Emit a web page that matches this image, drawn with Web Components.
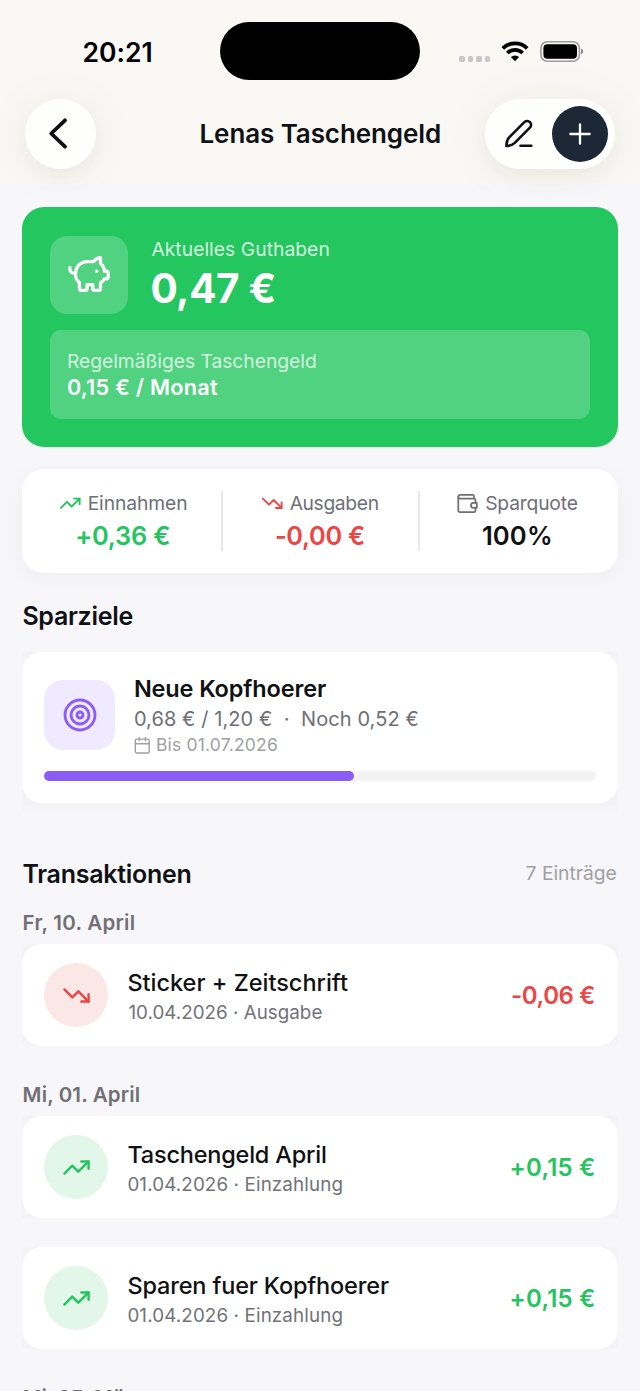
<!DOCTYPE html>
<html lang="de">
<head>
<meta charset="utf-8">
<title>Lenas Taschengeld</title>
<style>
html{background:#f7f7fa}
body{margin:0;width:640px;height:1391px;overflow:hidden;font-family:Inter,"Liberation Sans",sans-serif;color:#101114}
</style>
</head>
<body>
<pocket-money-app></pocket-money-app>
<script>
const define = (name, html, setup) => {
  const tpl = document.createElement('template');
  tpl.innerHTML = html;
  customElements.define(name, class extends HTMLElement {
    connectedCallback() {
      if (this.shadowRoot) return;
      this.attachShadow({mode: 'open'}).append(tpl.content.cloneNode(true));
      if (setup) setup(this, this.shadowRoot);
    }
  });
};

const ICONS = {
  back: '<path d="M19 1.300 5.200 14.500 19 27.700"/>',
  plus: '<path d="M12 2.300v19.400M2.300 12h19.400"/>',
  pig: '<path d="M11 17h3v2a1 1 0 0 0 1 1h2a1 1 0 0 0 1-1v-3a3.16 3.16 0 0 0 2-2h1a1 1 0 0 0 1-1v-2a1 1 0 0 0-1-1h-1a5 5 0 0 0-2-4V3a4 4 0 0 0-3.2 1.6l-.3.4H11a6 6 0 0 0-6 6v1a5 5 0 0 0 2 4v3a1 1 0 0 0 1 1h2a1 1 0 0 0 1-1z"/><path d="M16 10h.01"/><path d="M2 8v1a2 2 0 0 0 2 2h1"/>',
  up: '<path d="M16 7h6v6"/><path d="m22 7-8.5 8.5-5-5L2 17"/>',
  down: '<path d="M16 17h6v-6"/><path d="m22 17-8.5-8.5-5 5L2 7"/>',
  wallet: '<path d="M20.300 11V8.300a1.500 1.500 0 0 0-1.500-1.500H4.200a1.800 1.800 0 0 1-1.800-1.900 2 2 0 0 1 2-2h12.800a1.600 1.600 0 0 1 1.600 1.600v2.300"/><path d="M2.400 4.900v14.300a1.800 1.800 0 0 0 1.800 1.800h14.600a1.500 1.500 0 0 0 1.500-1.500v-2.800"/><path d="M21.700 11.300h-3.500a2.600 2.600 0 0 0 0 5.200h3.500z"/>',
  target: '<circle cx="12" cy="12" r="10"/><circle cx="12" cy="12" r="6"/><circle cx="12" cy="12" r="2"/>',
  calendar: '<path d="M8 2v4M16 2v4M3 10h18"/><rect x="3" y="4" width="18" height="18" rx="2"/>',
  pencil: '<path d="M3.400 28c0-3.400.6-6.400 2.800-8.700L21.600 3.900a3.900 3.900 0 0 1 5.500 5.500L11.800 24.900c-2.300 2.200-5 3.100-8.400 3.100z"/><path d="M17.500 27.800h10.800"/>'
};
define('ui-icon', '<style>:host{display:block;flex:none}svg{display:block;fill:none;stroke:currentColor;stroke-linecap:round;stroke-linejoin:round;overflow:visible}</style><svg></svg>', (el, root) => {
  const s = el.getAttribute('size'), svg = root.querySelector('svg');
  svg.setAttribute('viewBox', el.getAttribute('box') || '0 0 24 24');
  svg.setAttribute('width', s);
  svg.setAttribute('height', s);
  svg.setAttribute('stroke-width', el.getAttribute('stroke') || 2);
  svg.innerHTML = ICONS[el.getAttribute('name')];
});

/* One line of text. Its box is the cap height tall; "w" tracks the line to an optical width. */
const pen = document.createElement('canvas').getContext('2d');
define('ui-text', '<style>:host{display:block;flex:none;white-space:pre;line-height:.7273}</style><slot></slot>', (el) => {
  const size = el.getAttribute('size'), weight = el.getAttribute('weight') || 400, w = el.getAttribute('w') - 1;
  const text = el.textContent;
  el.style.fontSize = size + 'px';
  el.style.fontWeight = weight;
  pen.font = `${weight} ${size}px Inter`;
  const m = pen.measureText(text);
  const ink = m.actualBoundingBoxRight + m.actualBoundingBoxLeft;
  el.style.letterSpacing = ((w - ink) / (text.length - 1)).toFixed(3) + 'px';
  el.style.textIndent = m.actualBoundingBoxLeft.toFixed(2) + 'px';
  el.style.width = w + 'px';
});

define('status-bar', `<style>
:host{display:grid;grid-template-columns:220px 200px 1fr;height:98px;box-sizing:border-box;padding-top:22px;color:#000}
.time{padding:20.500px 0 0 83.500px}
.island{height:58px;border-radius:29px;background:#000}
.sys{display:flex;align-items:flex-start;padding:19px 0 0 39px}
.dots{display:flex;gap:3px;padding-top:15px}
.dots i{width:5.600px;height:5.600px;border-radius:1.800px;background:#c8c8ca}
.wifi{margin-left:10.700px}
.bat{margin-left:11px}
svg{display:block}
</style>
<div class="time"><ui-text size="26.500" weight="600" w="69">20:21</ui-text></div>
<div class="island"></div>
<div class="sys"><div class="dots"><i></i><i></i><i></i><i></i></div>
<svg class="wifi" width="28" height="21" viewBox="0 0 28 21"><g fill="none" stroke="#000" stroke-width="3.700"><path d="M1.800 7.300a17.500 17.500 0 0 1 24.400 0"/><path d="M6.300 12a11.200 11.200 0 0 1 15.400 0"/></g><path d="M14 20.200 9.900 16.100a6 6 0 0 1 8.200 0z"/></svg>
<svg class="bat" width="45" height="21" viewBox="0 0 45 21"><rect x=".9" y=".8" width="38.500" height="19.400" rx="6.300" fill="none" stroke="#9c9b9e" stroke-width="1.600"/><rect x="3.400" y="3.300" width="33.600" height="14.400" rx="4"/><path d="M41 7.600q2.300 1 2.300 2.900t-2.300 2.900z" fill="#8f8f92"/></svg></div>`);

define('nav-bar', `<style>
:host{display:flex;align-items:flex-start;justify-content:space-between;padding:0 25.500px 0 25px;height:86px}
.glass{display:flex;align-items:center;height:70px;box-sizing:border-box;border-radius:35px;background:#fefefd;box-shadow:0 8px 14px rgba(60,50,60,.035),0 3px 50px rgba(60,50,40,.06)}
.back{width:70.500px;margin-top:.5px;justify-content:center}
.title{padding-top:27px;margin-left:60.500px}
.acts{width:130px;margin-top:.5px;justify-content:flex-end;padding:0 6.500px 0 0;gap:18px}
.add{display:grid;place-items:center;width:56px;height:56px;border-radius:50%;background:#1c2836;color:#fff}
</style>
<div class="glass back"><ui-icon name="back" size="29" box="0 0 29 29" stroke="3.800"></ui-icon></div>
<div class="title"><ui-text size="26" weight="600" w="240.500">Lenas Taschengeld</ui-text></div>
<div class="glass acts"><ui-icon name="pencil" size="31" box="0 0 31 31" stroke="2.600"></ui-icon><div class="add"><ui-icon name="plus" size="24" stroke="2.300"></ui-icon></div></div>`);

define('balance-card', `<style>
:host{display:block;box-sizing:border-box;height:239.500px;border-radius:22px;background:#24c65f;padding:28.500px 28px;color:#fff}
.top{display:flex;gap:23px;height:94.500px}
.tile{display:grid;place-items:center;width:78px;height:78px;border-radius:17px;background:#50d280}
.col{padding-top:6px}
.big{margin-top:18.500px}
.soft{color:#d3f4df}
.plan{box-sizing:border-box;height:88.500px;border-radius:11px;background:#50d280;padding:24px 17.500px}
.plan .v{margin-top:12px}
</style>
<div class="top"><div class="tile"><ui-icon name="pig" size="46" stroke="1.700"></ui-icon></div>
<div class="col"><ui-text class="soft" size="19.300" w="178">Aktuelles Guthaben</ui-text><ui-text class="big" size="40.500" weight="700" w="124">0,47 €</ui-text></div></div>
<div class="plan"><ui-text class="soft" size="19.300" w="249">Regelmäßiges Taschengeld</ui-text><ui-text class="v" size="21.700" weight="600" w="151">0,15 € / Monat</ui-text></div>`);

define('stat-item', `<style>
:host{display:flex;flex-direction:column;align-items:center;flex:none}
.l{display:flex;align-items:center;color:#6f6f76;height:24px}
.v{margin-top:12px}
</style><div class="l"><slot name="icon"></slot><slot name="label"></slot></div><div class="v"><slot></slot></div>`);

define('stats-card', `<style>
:host{display:flex;box-sizing:border-box;height:104px;border-radius:22px;background:#fff;padding-top:22px;box-shadow:0 5px 24px rgba(40,40,50,.04)}
hr{border:0;margin:0;width:2px;height:60px;background:#e8e8eb}
.g{color:#22c55e}.r{color:#ef4444}.w{color:#6f6f76}
[slot=icon]{margin-right:7px}
[slot=label]{padding-top:.5px}
</style>
<stat-item style="width:198.500px"><ui-icon slot="icon" class="g" name="up" size="22.500" stroke="2" style="margin-left:2px"></ui-icon><ui-text slot="label" size="19.300" w="98.500">Einnahmen</ui-text><ui-text class="g" size="25.300" weight="600" w="93" style="margin-left:3px">+0,36 €</ui-text></stat-item><hr>
<stat-item style="width:195px"><ui-icon slot="icon" class="r" name="down" size="22.500" stroke="2" style="margin-right:6px;margin-left:-2px"></ui-icon><ui-text slot="label" size="19.300" w="89">Ausgaben</ui-text><ui-text class="r" size="25.300" weight="600" w="89" style="margin-right:1px">-0,00 €</ui-text></stat-item><hr>
<stat-item style="width:194px"><ui-icon slot="icon" class="w" name="wallet" size="23" stroke="1.800"></ui-icon><ui-text slot="label" size="19.300" w="92.500">Sparquote</ui-text><ui-text size="25.600" weight="600" w="69">100%</ui-text></stat-item>`);

define('goal-card', `<style>
:host{display:block;height:160px;background:linear-gradient(#f4f4f6,#f3f3f5 94%,#f6f6f8)}
.card{box-sizing:border-box;height:151px;border-radius:20px;background:#fff;padding:28px 22px 0}
.row{display:flex;gap:20px;height:91px}
.tile{display:grid;place-items:center;width:70.500px;height:70px;border-radius:19px;background:#efeaff;color:#8b5cf6}
.sub{color:#6f6f76;margin-top:14.500px}
.due{display:flex;align-items:center;gap:7px;color:#a0a0a3;margin-top:11px;height:16px}
.bar{height:10px;border-radius:5px;background:#f3f3f4}
.bar i{display:block;width:310px;height:10px;border-radius:5px;background:#8b5cf6}
</style>
<div class="card"><div class="row"><div class="tile"><ui-icon name="target" size="36" stroke="1.900"></ui-icon></div><div>
<ui-text size="23.500" weight="600" w="192">Neue Kopfhoerer</ui-text>
<ui-text class="sub" size="20" w="284.500">0,68 € / 1,20 €  ·  Noch 0,52 €</ui-text>
<div class="due"><ui-icon name="calendar" size="18.500" stroke="1.800" style="margin:-1px -2px 0 -1.500px"></ui-icon><ui-text size="17.500" w="121" style="padding-top:1px">Bis 01.07.2026</ui-text></div></div></div>
<div class="bar"><i></i></div></div>`);

define('entry-card', `<style>
:host{display:block;background:#f4f4f7}
.card{display:flex;box-sizing:border-box;height:102px;border-radius:20px;background:#fff;padding:0 23.500px 0 22px;align-items:center}
.dot{display:grid;place-items:center;width:64px;height:64px;border-radius:50%;background:#e3f6ea;color:#22c55e;margin-right:20px}
:host([out]) .dot{background:#fce7e7;color:#ef4444}
.text{padding-top:3px}
.sub{color:#727278;margin-top:15px}
.sum{margin-left:auto;color:#22c55e;padding-top:1.500px}
:host([out]) .sum{color:#ef4444}
</style>
<div class="card"><div class="dot"></div><div class="text"><slot name="title"></slot><div class="sub"><slot name="sub"></slot></div></div><div class="sum"><slot></slot></div></div>`, (el, root) => {
  root.querySelector('.dot').innerHTML = `<ui-icon name="${el.hasAttribute('out') ? 'down' : 'up'}" size="29" stroke="2"></ui-icon>`;
});

define('pocket-money-app', `<style>
:host{display:block;height:1391px;overflow:hidden;background:linear-gradient(#f9f8f4 0 180px,#f7f7f9 190px,#f7f7fa 210px)}
main{display:flex;flex-direction:column;padding:23px 22.400px 0}
h2{margin:0;font:inherit}
.head{display:flex;justify-content:space-between;align-items:flex-end}
.day{color:#707075}
.muted{color:#a0a0a4}
</style>
<status-bar></status-bar><nav-bar></nav-bar>
<main>
<balance-card></balance-card>
<stats-card style="margin-top:22.500px"></stats-card>
<h2 style="margin:34px 0 0 1px"><ui-text size="25" weight="600" w="110">Sparziele</ui-text></h2>
<goal-card style="margin-top:27px"></goal-card>
<div class="head" style="margin:53px 1px 0"><ui-text size="25" weight="600" w="168">Transaktionen</ui-text><ui-text class="muted" size="19.300" w="92" style="padding-bottom:3px">7 Einträge</ui-text></div>
<ui-text class="day" style="margin:33px 0 0 1.200px" size="20.500" weight="600" w="112">Fr, 10. April</ui-text>
<entry-card out style="margin-top:13px"><ui-text slot="title" size="23.500" weight="500" w="220.500">Sticker + Zeitschrift</ui-text><ui-text slot="sub" size="18.800" w="195">10.04.2026 · Ausgabe</ui-text><ui-text size="24" weight="600" w="83">-0,06 €</ui-text></entry-card>
<ui-text class="day" style="margin:42px 0 0 1.200px" size="20.500" weight="600" w="117">Mi, 01. April</ui-text>
<entry-card style="margin-top:13px"><ui-text slot="title" size="23.500" weight="500" w="198.500">Taschengeld April</ui-text><ui-text slot="sub" size="18.800" w="215">01.04.2026 · Einzahlung</ui-text><ui-text size="24" weight="600" w="83.500">+0,15 €</ui-text></entry-card>
<entry-card style="margin-top:29px"><ui-text slot="title" size="23.500" weight="500" w="261.500">Sparen fuer Kopfhoerer</ui-text><ui-text slot="sub" size="18.800" w="215">01.04.2026 · Einzahlung</ui-text><ui-text size="24" weight="600" w="83.500">+0,15 €</ui-text></entry-card>
<ui-text class="day" style="margin:41.500px 0 0 1.200px" size="20.500" weight="600" w="122">Mi, 25. März</ui-text>
</main>`);
</script>
</body>
</html>
